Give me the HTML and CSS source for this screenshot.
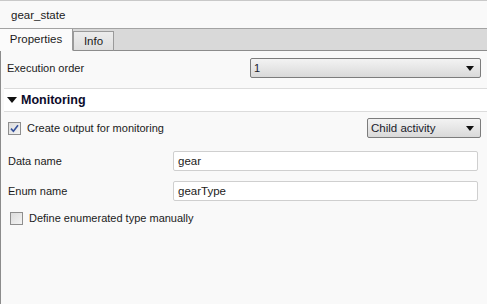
FILE: index.html
```html
<!DOCTYPE html>
<html>
<head>
  <title>gear_state</title>
<link rel="stylesheet" href="styles.css">
</head>
<body>
  <div class="pi-panel">
    <div class="pi-title">gear_state</div>

    <div class="pi-tabs">
      <div class="pi-tab pi-tab_active">Properties</div>
      <div class="pi-tab">Info</div>
    </div>

    <div class="pi-body">
      <div class="pi-row pi-row_exec">
        <div class="pi-label">Execution order</div>
        <div class="pi-select pi-select_wide">
          <span class="pi-select_value">1</span>
          <span class="pi-select_arrow"></span>
        </div>
      </div>

      <div class="pi-section">
        <span class="pi-section_arrow"></span>
        <span>Monitoring</span>
      </div>

      <div class="pi-group">
        <div class="pi-row pi-row_check">
          <label class="pi-check">
            <span class="pi-check_box">
              <svg width="9" height="9" viewBox="0 0 9 9"><path d="M1 4.6 L3.4 7.2 L8 1.2" fill="none" stroke="#34509a" stroke-width="1.6"/></svg>
            </span>
            Create output for monitoring
          </label>
          <div class="pi-select pi-select_small">
            <span class="pi-select_value">Child activity</span>
            <span class="pi-select_arrow"></span>
          </div>
        </div>

        <div class="pi-row pi-row_field">
          <div class="pi-label pi-label_field">Data name</div>
          <div class="pi-input">gear</div>
        </div>

        <div class="pi-row pi-row_field pi-row_enum">
          <div class="pi-label pi-label_field">Enum name</div>
          <div class="pi-input">gearType</div>
        </div>

        <div class="pi-row pi-row_define">
          <label class="pi-check">
            <span class="pi-check_box"></span>
            Define enumerated type manually
          </label>
        </div>
      </div>
    </div>
  </div>
</body>
</html>
```

FILE: styles.css
```css
/* Property inspector */
html, body {
    margin: 0;
    padding: 0;
    height: 100%;
}

body {
    font-family: "Liberation Sans", Arial, sans-serif;
    font-size: 11px;
    color: #1b1b1b;
    background: #f9f9f9;
}

.pi-panel {
    display: flex;
    flex-direction: column;
    height: 100%;
}

.pi-title {
    height: 27px;
    border-top: 1px solid #c9c9c9;
    border-bottom: 1px solid #a3a3a3;
    background: #f9f9f9;
    display: flex;
    align-items: center;
    padding-left: 11px;
    font-size: 11.5px;
}

.pi-tabs {
    display: flex;
    align-items: flex-end;
    height: 21px;
    background: #d9d9d9;
    border-bottom: 1px solid #8c8c8c;
}

.pi-tab {
    height: 18px;
    width: 39px;
    margin-bottom: -1px;
    border: 1px solid #9a9a9a;
    border-bottom: 1px solid #8c8c8c;
    background: linear-gradient(#ececec, #dedede);
    display: flex;
    align-items: center;
    justify-content: center;
    font-size: 11.5px;
}

.pi-tab_active {
    width: 73px;
    height: 22px;
    border: none;
    border-right: 1px solid #9a9a9a;
    border-bottom: 1px solid #f9f9f9;
    background: #fbfbfb;
    padding-bottom: 2px;
    box-sizing: border-box;
}

.pi-body {
    flex: 1;
    border-left: 1px solid #8c8c8c;
    background: #f9f9f9;
}

.pi-row {
    display: flex;
    align-items: center;
}

.pi-row_exec {
    height: 38px;
    box-sizing: border-box;
    align-items: flex-start;
    justify-content: space-between;
    margin-left: 3px;
    padding: 7px 6px 0 3px;
    border-bottom: 1px solid #dcdcdc;
}

.pi-row_exec .pi-label {
    line-height: 20px;
}

.pi-select {
    height: 18px;
    border: 1px solid #7c7c7c;
    border-radius: 2px;
    background: linear-gradient(#f3f3f3, #d9d9d9);
    display: flex;
    align-items: center;
    justify-content: space-between;
    padding: 0 6px 0 3px;
}

.pi-select_wide {
    width: 220px;
}

.pi-select_small {
    width: 103px;
    font-size: 11.5px;
}

.pi-select_value {
    color: #1a1a2a;
}

.pi-select_arrow {
    width: 0;
    height: 0;
    border-left: 4px solid transparent;
    border-right: 4px solid transparent;
    border-top: 5px solid #111;
}

.pi-section {
    height: 22px;
    margin-left: 3px;
    padding-left: 3px;
    background: #fff;
    border-bottom: 1px solid #dcdcdc;
    display: flex;
    align-items: center;
    gap: 4px;
    font-weight: bold;
    font-size: 12.5px;
    color: #0b0b2a;
}

.pi-section_arrow {
    width: 0;
    height: 0;
    border-left: 5px solid transparent;
    border-right: 5px solid transparent;
    border-top: 6px solid #111;
    margin-top: -1px;
}

.pi-group {
    padding: 6px 6px 0 7px;
}

.pi-row_check {
    justify-content: space-between;
    height: 20px;
}

.pi-check {
    display: flex;
    align-items: center;
    gap: 6px;
}

.pi-check_box {
    width: 11px;
    height: 11px;
    border: 1px solid #8e8e8e;
    background: linear-gradient(135deg, #dcdcdc, #f4f4f4);
    display: flex;
    align-items: center;
    justify-content: center;
}

.pi-row_field {
    height: 20px;
    margin-top: 13px;
    padding-right: 3px;
}

.pi-row_enum {
    margin-top: 10px;
}

.pi-label_field {
    width: 165px;
}

.pi-input {
    flex: 1;
    height: 18px;
    border: 1px solid #cfcfcf;
    border-radius: 2px;
    background: #fff;
    display: flex;
    align-items: center;
    padding-left: 4px;
    font-size: 11.5px;
}

.pi-row_define {
    height: 20px;
    margin-top: 7px;
    padding-left: 2px;
}
```
